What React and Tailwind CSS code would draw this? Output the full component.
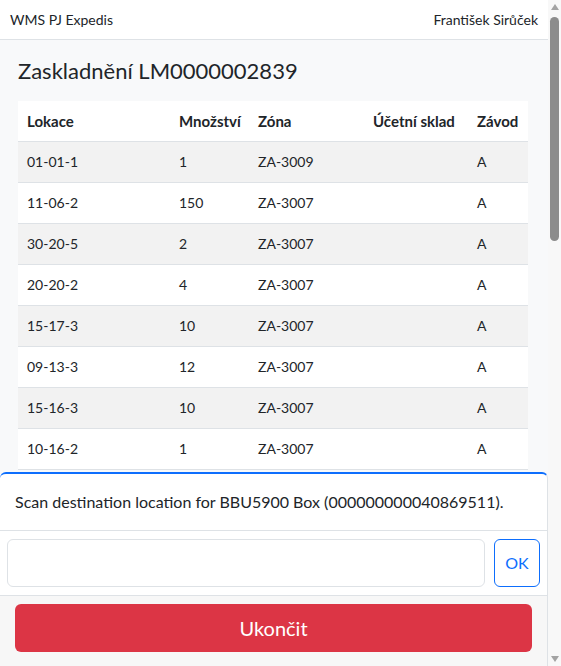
import { useState } from "react";

const rows = [
  ["01-01-1", "1", "ZA-3009", "", "A"],
  ["11-06-2", "150", "ZA-3007", "", "A"],
  ["30-20-5", "2", "ZA-3007", "", "A"],
  ["20-20-2", "4", "ZA-3007", "", "A"],
  ["15-17-3", "10", "ZA-3007", "", "A"],
  ["09-13-3", "12", "ZA-3007", "", "A"],
  ["15-16-3", "10", "ZA-3007", "", "A"],
  ["10-16-2", "1", "ZA-3007", "", "A"],
];

const cols = ["w-[152px]", "w-[79px]", "w-[115px]", "w-[104px]", "w-[60px]"];
const headers = ["Lokace", "Množství", "Zóna", "Účetní sklad", "Závod"];

export default function App() {
  const [code, setCode] = useState("");

  return (
    <div className="h-screen flex overflow-hidden bg-[#f8f9fa] text-[#212529] font-['Lato','Liberation_Sans',sans-serif]">
      <div className="relative flex-1 h-full overflow-hidden">
        <nav className="h-[40px] bg-white border-b border-[#dee2e6] flex items-center justify-between px-[10px] text-[14px]">
          <span>WMS PJ Expedis</span>
          <span>František Sirůček</span>
        </nav>

        <main className="px-[18px]">
          <h4 className="pt-[17px] pb-[16px] text-[22px] leading-[28px]">Zaskladnění LM0000002839</h4>

          <table className="w-[510px] bg-white border-collapse table-fixed text-[14px]">
            <thead>
              <tr className="h-[40px]">
                {headers.map((h, i) => (
                  <th key={h} className={`${cols[i]} text-left font-bold text-[15px] pl-[9px] border-b border-[#dee2e6]`}>
                    {h}
                  </th>
                ))}
              </tr>
            </thead>
            <tbody>
              {rows.map((r, idx) => (
                <tr key={idx} className={`h-[41px] ${idx % 2 === 0 ? "bg-[#f2f2f2]" : "bg-white"}`}>
                  {r.map((c, i) => (
                    <td key={i} className="pl-[9px] border-b border-[#dee2e6]">
                      {c}
                    </td>
                  ))}
                </tr>
              ))}
            </tbody>
          </table>
        </main>

        {/* scan panel pinned over the list */}
        <div className="absolute bottom-0 left-0 right-0 bg-white border-t-2 border-t-[#0d6efd] border-r border-r-[#dee2e6] rounded-t-md">
          <div className="px-[15px] py-[16px] leading-[24px] text-[16px] border-b border-[#dee2e6]">
            Scan destination location for BBU5900 Box (000000000040869511).
          </div>
          <div className="flex gap-[9px] pl-[7px] pr-[7px] py-[8px] border-b border-[#dee2e6]">
            <input
              value={code}
              onChange={(e) => setCode(e.target.value)}
              className="flex-1 h-[48px] rounded-md border border-[#dee2e6] bg-white px-3 outline-none"
            />
            <button className="w-[46px] h-[48px] rounded-md border border-[#0d6efd] text-[#0d6efd] text-[16px]">
              OK
            </button>
          </div>
          <div className="bg-[#f7f7f7] pl-[15px] pr-[15px] pt-[8px] pb-[14px]">
            <button className="w-full h-[48px] rounded-md bg-[#dc3545] text-white text-[20px]">
              Ukončit
            </button>
          </div>
        </div>
      </div>

      {/* page scrollbar */}
      <div className="w-[13px] h-full bg-[#f8f8f8] flex flex-col items-center">
        <svg width="10" height="16" viewBox="0 0 10 16" className="shrink-0">
          <path d="M1 10 L5 4 L9 10 Z" fill="#a3a3a3" />
        </svg>
        <div className="w-[9px] h-[224px] mt-[1px] rounded-full bg-[#8c8c8c]" />
        <div className="flex-1" />
        <svg width="10" height="16" viewBox="0 0 10 16" className="shrink-0">
          <path d="M1 6 L9 6 L5 12 Z" fill="#a3a3a3" />
        </svg>
      </div>
    </div>
  );
}
